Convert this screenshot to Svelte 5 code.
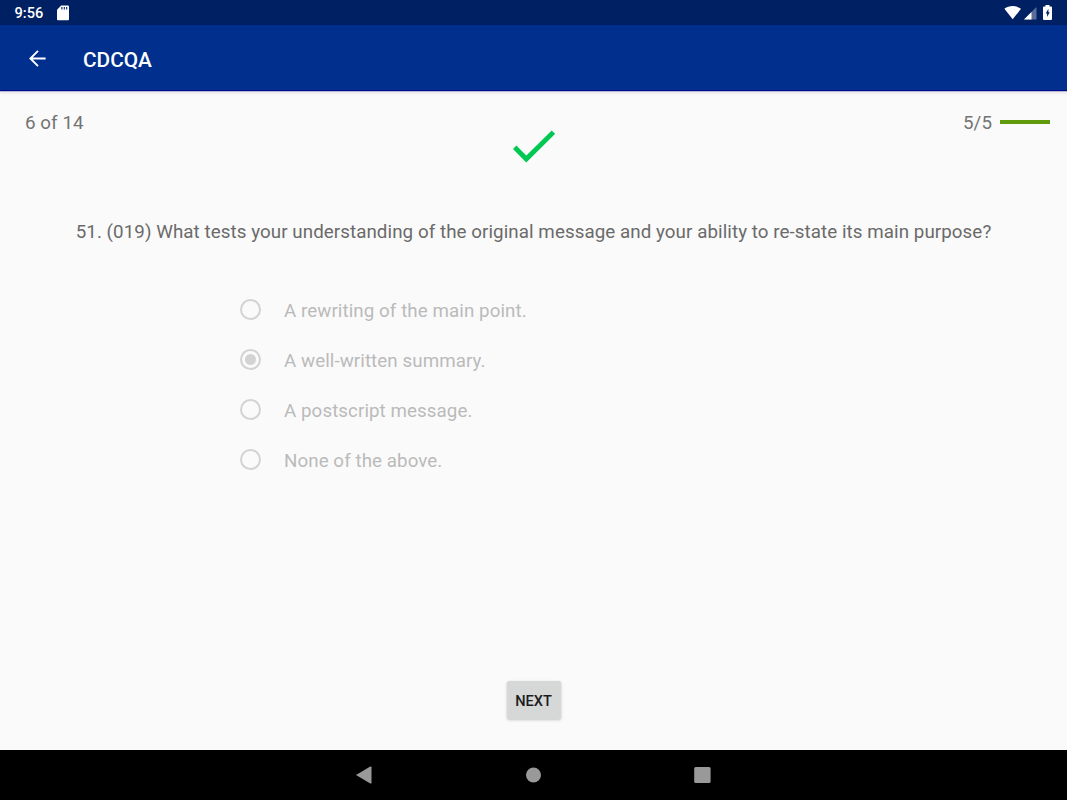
<script lang="ts">
  const question =
    '51. (019) What tests your understanding of the original message and your ability to re-state its main purpose?';

  const answers = [
    'A rewriting of the main point.',
    'A well-written summary.',
    'A postscript message.',
    'None of the above.',
  ];

  let selected = $state(1);
  let correct = 5;
  let answered = 5;
</script>

<div class="screen">
  <div class="status-bar">
    <span class="clock">9:56</span>
    <svg class="sd-card" width="12" height="16" viewBox="0 0 12 16">
      <path d="M4.2 .5H11a1 1 0 0 1 1 1v12.8a1 1 0 0 1-1 1H1a1 1 0 0 1-1-1V4.7z" fill="#fff" />
      <path d="M4.9 2v2.6M7.3 2v2.6M9.7 2v2.6" stroke="#002064" stroke-width="1.1" />
    </svg>
    <div class="status-icons">
      <svg class="wifi" width="17" height="14" viewBox="0 0 17 14">
        <path d="M.4 2.8C5.200-.8 12.200-.8 17 2.800L8.700 13.300z" fill="#fff" />
      </svg>
      <svg class="signal" width="13" height="13" viewBox="0 0 13 13">
        <path d="M0 12.5 12.5 0v12.5z" fill="#fff" opacity=".35" />
        <path d="M0 12.5 7.5 5v7.5z" fill="#fff" />
      </svg>
      <svg class="battery" width="9" height="15" viewBox="0 0 9 15">
        <path d="M2.5 0h4v1.5H8a1 1 0 0 1 1 1V14a1 1 0 0 1-1 1H1a1 1 0 0 1-1-1V2.5a1 1 0 0 1 1-1h1.5z" fill="#fff" />
        <path d="M5.4 3.8 2.7 8.4h1.4v3.5l2.6-4.6H5.4z" fill="#002064" />
      </svg>
    </div>
  </div>

  <header class="app-bar">
    <button class="back" aria-label="Back">
      <svg width="17" height="17" viewBox="0 0 17 17">
        <path d="M16.6 8.5H1.7M9 .9 1.4 8.5 9 16.1" fill="none" stroke="#fff" stroke-width="1.9" />
      </svg>
    </button>
    <h1>CDCQA</h1>
  </header>

  <main>
    <div class="progress">
      <span>6 of 14</span>
      <div class="score">
        <span>{correct}/{answered}</span>
        <div class="track">
          <div class="fill" style="width: {(correct / answered) * 100}%"></div>
        </div>
      </div>
    </div>

    <svg class="check" width="42" height="33" viewBox="0 0 42 33">
      <path d="M1.7 17.3 13.3 29 40.4 2.1" fill="none" stroke="#00c853" stroke-width="4.8" />
    </svg>

    <p class="question">{question}</p>

    <div class="answers">
      {#each answers as answer, i}
        <div class="answer">
          <span class="radio" class:checked={i === selected}></span>
          <span class="label">{answer}</span>
        </div>
      {/each}
    </div>

    <button class="next">NEXT</button>
  </main>

  <nav class="nav-bar">
    <svg width="16" height="18" viewBox="0 0 16 18">
      <path d="M0 9 14.3.6Q15.5 0 15.5 1.3v15.4q0 1.3-1.2.7z" fill="#999" />
    </svg>
    <svg width="16" height="18" viewBox="0 0 16 18">
      <circle cx="8.5" cy="9" r="7.5" fill="#999" />
    </svg>
    <svg width="17" height="18" viewBox="0 0 17 18">
      <rect x=".2" y="1" width="16.4" height="16" rx="1.5" fill="#999" />
    </svg>
  </nav>
</div>

<style>
  :global(body) {
    margin: 0;
  }

  .screen {
    display: flex;
    flex-direction: column;
    width: 1067px;
    height: 800px;
    overflow: hidden;
    background: #fafafa;
    font-family: Roboto, sans-serif;
  }

  svg {
    display: block;
    flex: none;
  }

  button {
    border: none;
    padding: 0;
    font-family: inherit;
  }

  .status-bar {
    display: flex;
    align-items: center;
    box-sizing: border-box;
    height: 25px;
    padding: 0 15px 0 14.5px;
    background: #002064;
    color: #fff;
  }

  .clock {
    width: 42.5px;
    font-size: 14.6px;
    font-weight: 500;
    line-height: 25px;
    padding-top: 2px;
  }

  .status-icons {
    display: flex;
    align-items: center;
    margin-left: auto;
  }

  .signal {
    margin: 1px 6px 0 3px;
  }

  .app-bar {
    display: flex;
    align-items: center;
    box-sizing: border-box;
    height: 66px;
    padding-left: 29px;
    background: #002f8e;
    border-bottom: 1px solid #00088b;
    color: #fff;
    box-shadow: 0 1px 0 #b9b9d6, 0 2px 3px rgba(0, 0, 0, 0.1);
  }

  .back {
    width: 54px;
    padding-top: 2px;
    background: none;
  }

  h1 {
    margin: 4px 0 0;
    font-size: 20.8px;
    font-weight: 500;
    line-height: 24px;
  }

  main {
    display: flex;
    flex: 1;
    flex-direction: column;
    align-items: center;
    padding-top: 1px;
    color: #747474;
    font-size: 18.75px;
    line-height: 24px;
    letter-spacing: 0.07px;
  }

  .progress {
    display: flex;
    justify-content: space-between;
    align-self: stretch;
    height: 24px;
    padding: 19px 17px 0 25px;
  }

  .score {
    display: flex;
    align-items: center;
    gap: 8px;
  }

  .track {
    width: 50px;
    height: 4px;
    margin-bottom: 3px;
    background: #ddd;
  }

  .fill {
    height: 100%;
    background: #5f9b0c;
  }

  .check {
    margin-top: -5px;
  }

  .question {
    margin: 57px 0 0;
    color: #6a6a6a;
    white-space: nowrap;
  }

  .answers {
    align-self: stretch;
    padding: 40px 0 0 240px;
  }

  .answer {
    display: flex;
    align-items: center;
    height: 50px;
    gap: 23px;
    color: #bababa;
  }

  .radio {
    display: flex;
    align-items: center;
    justify-content: center;
    box-sizing: border-box;
    width: 21px;
    height: 21px;
    border: 2px solid #d3d3d3;
    border-radius: 50%;
  }

  .radio.checked::after {
    content: '';
    width: 11px;
    height: 11px;
    border-radius: 50%;
    background: #d3d3d3;
  }

  .label {
    padding-top: 4px;
  }

  .next {
    width: 54px;
    height: 38px;
    margin-top: auto;
    margin-bottom: 31px;
    border-radius: 2px;
    padding-top: 1px;
    background: #d6d7d7;
    box-shadow: 0 1px 3px rgba(0, 0, 0, 0.22);
    color: #1c1c1c;
    font-size: 14.6px;
    font-weight: 500;
  }

  .nav-bar {
    display: flex;
    align-items: center;
    justify-content: center;
    height: 50px;
    gap: 153px;
    background: #000;
  }
</style>
